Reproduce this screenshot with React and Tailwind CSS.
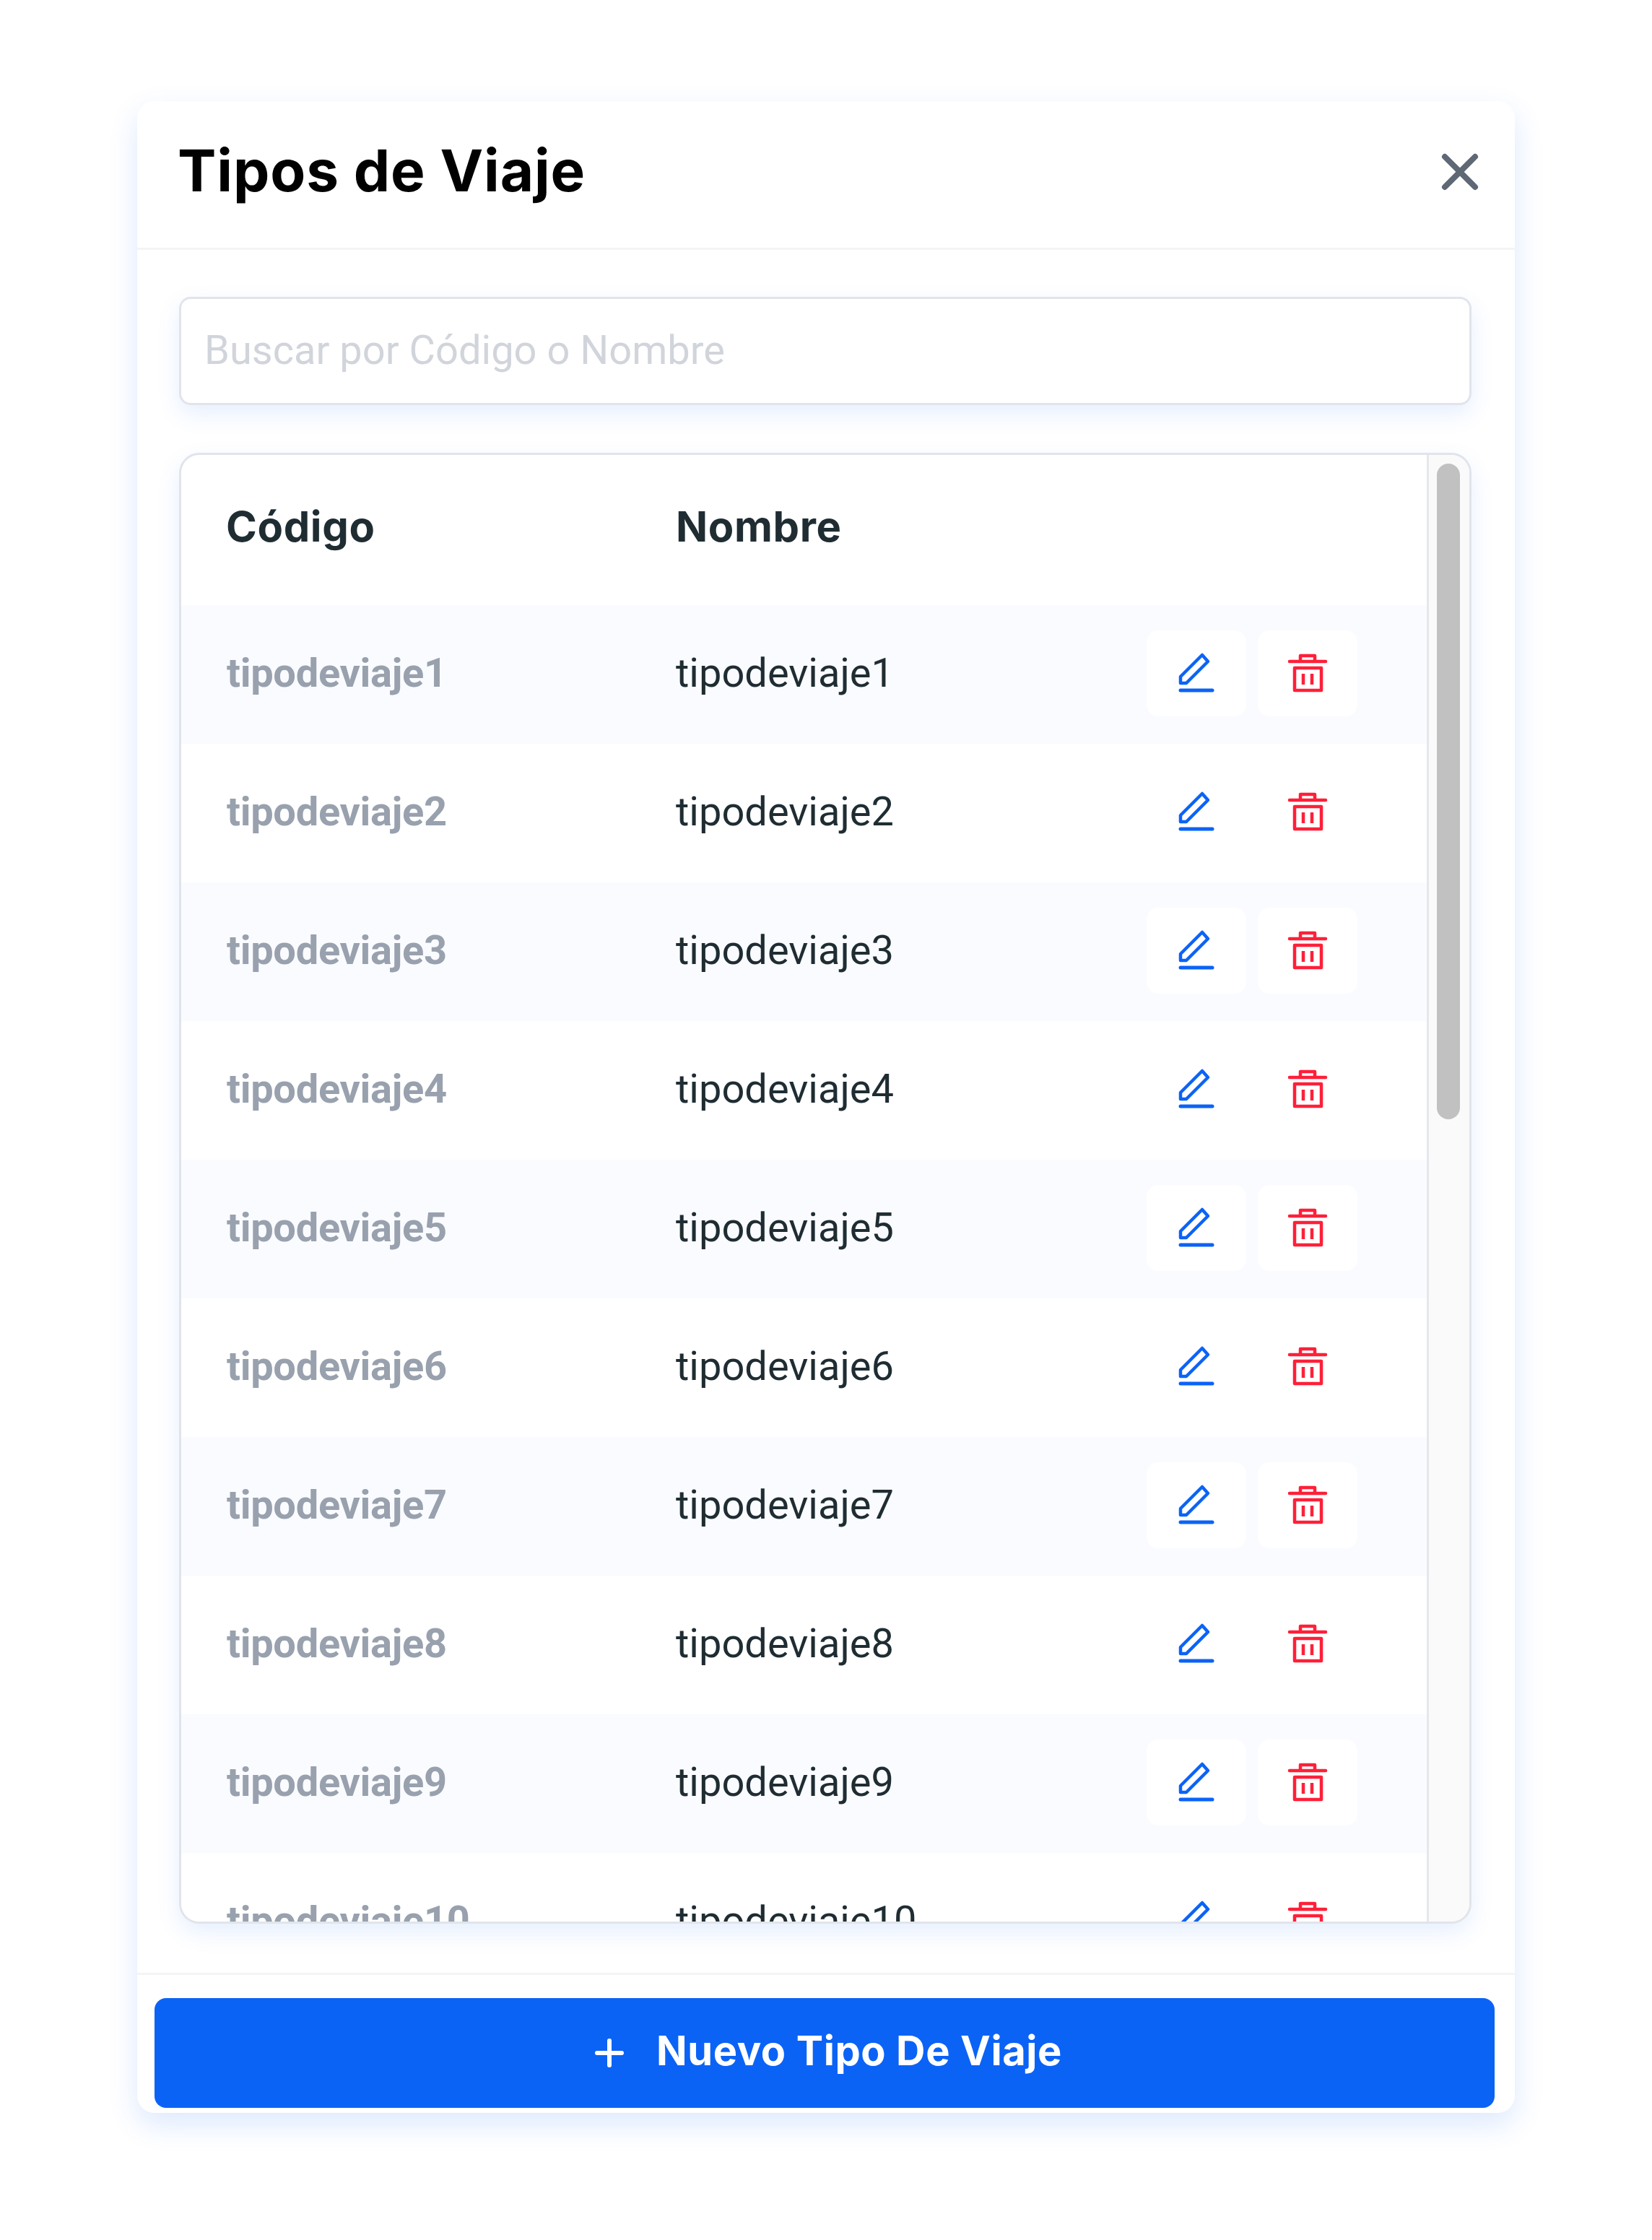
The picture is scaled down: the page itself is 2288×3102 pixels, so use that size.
import React from "react";

const heading = "font-['Inter',sans-serif]";
const body = "font-['Roboto',sans-serif]";

const rows = [
  "tipodeviaje1",
  "tipodeviaje2",
  "tipodeviaje3",
  "tipodeviaje4",
  "tipodeviaje5",
  "tipodeviaje6",
  "tipodeviaje7",
  "tipodeviaje8",
  "tipodeviaje9",
  "tipodeviaje10",
];

const EditIcon = () => (
  <svg width="60" height="60" viewBox="0 0 60 60" fill="none" stroke="#0b63f6">
    <path d="M8 35 L38 5 L46 14 L16 44 L8 44 Z" strokeWidth="4.5" strokeLinejoin="round" />
    <path d="M8 54 H52" strokeWidth="5" strokeLinecap="round" />
  </svg>
);

const TrashIcon = () => (
  <svg width="60" height="60" viewBox="0 0 60 60" fill="none" stroke="#ff1f38" strokeWidth="4.5">
    <path d="M5 14 H55" strokeLinecap="round" />
    <path d="M20 14 V6 H40 V14" strokeLinejoin="round" />
    <rect x="12" y="23" width="37" height="31" strokeLinejoin="round" />
    <path d="M24 31 V46 M36 31 V46" />
  </svg>
);

const Row = ({ name, shaded }) => (
  <div className={`flex h-[192px] shrink-0 items-center pb-[4px] pl-[63px] pr-[96px] ${shaded ? "bg-[#fafbff]" : "bg-white"}`}>
    <div className={`w-[622px] text-[56px] font-bold tracking-[-0.3px] text-[#98a1ad] ${body}`}>{name}</div>
    <div className={`flex-1 text-[56px] text-[#1f2d33] ${body}`}>{name}</div>
    <div className="flex gap-[16px]">
      <button className="flex h-[119px] w-[138px] items-center justify-center rounded-[16px] bg-white">
        <EditIcon />
      </button>
      <button className="flex h-[119px] w-[138px] items-center justify-center rounded-[16px] bg-white">
        <TrashIcon />
      </button>
    </div>
  </div>
);

export default function App() {
  return (
    <div className="min-h-[3102px] bg-white pt-[140px]">
      <div className="mx-auto flex h-[2786px] w-[1908px] flex-col rounded-[24px] bg-white shadow-[0_16px_40px_rgba(11,99,246,0.14)]">
        <header className="flex h-[206px] shrink-0 items-center justify-between border-b-[3px] border-[#f3f4f6] pb-[11px] pl-[56px] pr-[46px]">
          <h1 className={`text-[80px] font-bold tracking-[0.9px] text-black ${heading}`}>Tipos de Viaje</h1>
          <svg className="mt-[4px]" width="60" height="60" viewBox="0 0 60 60" fill="none" stroke="#5f6875" strokeWidth="8" strokeLinecap="round">
            <path d="M9 9 L51 51 M51 9 L9 51" />
          </svg>
        </header>

        <div className="flex min-h-0 flex-1 flex-col pb-[68px] pl-[58px] pr-[60px] pt-[65px]">
          <input
            placeholder="Buscar por Código o Nombre"
            className={`h-[150px] w-full shrink-0 rounded-[16px] border-[3px] border-[#e1e5eb] bg-white pb-[3px] pl-[32px] pr-[32px] text-[56px] shadow-[0_12px_32px_rgba(11,99,246,0.1)] outline-none placeholder:text-[#d1d5db] ${body}`}
          />

          <div className="mt-[66px] flex min-h-0 flex-1 overflow-hidden rounded-[28px] border-[3px] border-[#e1e4ea] bg-white shadow-[0_12px_32px_rgba(11,99,246,0.1)]">
            <div className="flex min-w-0 flex-1 flex-col overflow-hidden">
              <div className="flex h-[208px] shrink-0 items-center pb-[10px] pl-[62px]">
                <div className={`w-[623px] text-[58px] font-bold tracking-[0.6px] text-[#1f2d33] ${heading}`}>Código</div>
                <div className={`text-[58px] font-bold tracking-[0.6px] text-[#1f2d33] ${heading}`}>Nombre</div>
              </div>
              {rows.map((name, i) => (
                <Row key={name} name={name} shaded={i % 2 === 0} />
              ))}
            </div>
            <div className="w-[59px] shrink-0 border-l-[3px] border-[#e5e7eb] bg-[#fafafa] pl-[11px] pt-[12px]">
              <div className="h-[908px] w-[32px] rounded-full bg-[#c1c1c1]" />
            </div>
          </div>
        </div>

        <footer className="h-[194px] shrink-0 border-t-[3px] border-[#f3f4f6] pl-[24px] pr-[28px] pt-[32px]">
          <button className={`flex h-[152px] w-full items-center justify-center gap-[44px] rounded-[16px] bg-[#0b63f6] pl-[10px] text-[56px] font-bold tracking-[0.6px] text-white ${heading}`}>
            <svg width="42" height="42" viewBox="0 0 42 42" fill="none" stroke="white" strokeWidth="6" strokeLinecap="round">
              <path d="M21 4 V38 M4 21 H38" />
            </svg>
            <span className="pb-[6px]">Nuevo Tipo De Viaje</span>
          </button>
        </footer>
      </div>
    </div>
  );
}
